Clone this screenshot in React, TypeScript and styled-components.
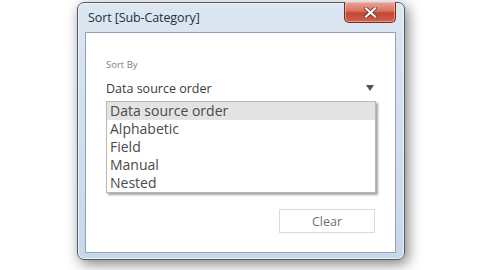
import * as React from "react";
import styled, { createGlobalStyle } from "styled-components";

const GlobalStyle = createGlobalStyle`
  html, body {
    margin: 0;
    padding: 0;
    background: #ffffff;
  }
  body {
    font-family: "Open Sans", "Noto Sans", sans-serif;
  }
`;

const Page = styled.div`
  width: 480px;
  height: 270px;
  overflow: hidden;
  padding: 2px 0 0 77px;
  box-sizing: border-box;
`;

const Window = styled.div`
  width: 328px;
  height: 258px;
  box-sizing: border-box;
  display: flex;
  flex-direction: column;
  border: 1px solid #4f5a66;
  border-radius: 7px;
  padding: 0 8px 6px 7px;
  background: linear-gradient(180deg, #dde7f2 0%, #d5e1ee 30%, #c8d7e8 100%);
  box-shadow: 3px 4px 14px rgba(0, 0, 0, 0.5), inset 0 0 0 1px #eef4fa;
`;

const TitleBar = styled.div`
  height: 29px;
  display: flex;
  justify-content: space-between;
  align-items: flex-start;
  flex: none;
`;

const Title = styled.div`
  padding: 6px 0 0 3px;
  font-size: 12.5px;
  color: #26303b;
  letter-spacing: -0.1px;
`;

const CloseButton = styled.div`
  width: 50px;
  height: 20px;
  margin-top: -1px;
  border: 1px solid #7a2a22;
  border-top: none;
  border-radius: 0 0 5px 5px;
  background: linear-gradient(180deg, #e8a69b 0%, #d9725f 45%, #c24732 55%, #d0634c 100%);
  display: flex;
  align-items: center;
  justify-content: center;
  box-shadow: inset 0 0 0 1px rgba(255, 210, 200, 0.5);
`;

const Content = styled.div`
  flex: 1;
  background: #ffffff;
  border: 1px solid #8fa3b8;
  padding: 25px 19px 0 20px;
  display: flex;
  flex-direction: column;
`;

const Label = styled.div`
  font-size: 9.5px;
  line-height: 14px;
  color: #808080;
`;

const SelectRow = styled.div`
  height: 22px;
  margin-top: 5px;
  display: flex;
  align-items: center;
  justify-content: space-between;
  font-size: 12.5px;
  color: #3a3a3a;
  padding-right: 2px;
`;

const Arrow = styled.div`
  width: 0;
  height: 0;
  border-left: 4.5px solid transparent;
  border-right: 4.5px solid transparent;
  border-top: 6px solid #555555;
`;

const List = styled.div`
  margin-top: 2px;
  border: 1px solid #b8b8b8;
  background: #ffffff;
  box-shadow: 2px 2px 2px rgba(0, 0, 0, 0.35);
`;

const Item = styled.div<{ $active?: boolean }>`
  height: 18px;
  line-height: 18px;
  padding-left: 3px;
  font-size: 14px;
  color: #4a4a4a;
  background: ${(p) => (p.$active ? "#e3e3e3" : "transparent")};
`;

const Footer = styled.div`
  display: flex;
  justify-content: flex-end;
  margin-top: 16px;
  padding-right: 1px;
`;

const ClearButton = styled.div`
  width: 96px;
  height: 24px;
  box-sizing: border-box;
  border: 1px solid #dadada;
  display: flex;
  align-items: center;
  justify-content: center;
  font-size: 12.5px;
  color: #707070;
`;

const items = ["Data source order", "Alphabetic", "Field", "Manual", "Nested"];

export default function App() {
  return (
    <Page>
      <GlobalStyle />
      <Window>
        <TitleBar>
          <Title>Sort [Sub-Category]</Title>
          <CloseButton>
            <svg width="13" height="11" viewBox="0 0 13 11">
              <path
                d="M2 1.5 L11 9.5 M11 1.5 L2 9.5"
                stroke="#5a2a24"
                strokeWidth="3.6"
                strokeLinecap="square"
              />
              <path
                d="M2 1.5 L11 9.5 M11 1.5 L2 9.5"
                stroke="#ffffff"
                strokeWidth="2.2"
                strokeLinecap="square"
              />
            </svg>
          </CloseButton>
        </TitleBar>
        <Content>
          <Label>Sort By</Label>
          <SelectRow>
            <span>Data source order</span>
            <Arrow />
          </SelectRow>
          <List>
            {items.map((item, i) => (
              <Item key={item} $active={i === 0}>
                {item}
              </Item>
            ))}
          </List>
          <Footer>
            <ClearButton>Clear</ClearButton>
          </Footer>
        </Content>
      </Window>
    </Page>
  );
}
